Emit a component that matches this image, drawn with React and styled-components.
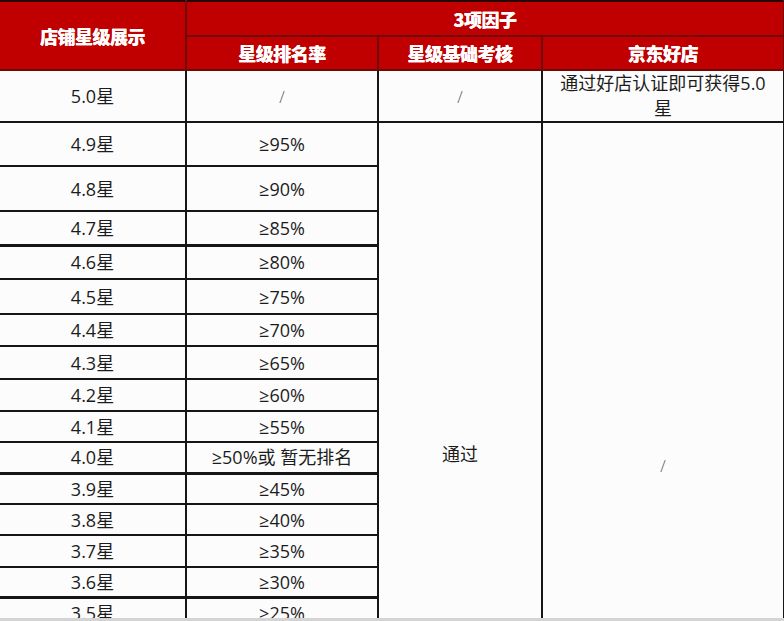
import React from 'react';
import styled, {createGlobalStyle} from "styled-components";

const GlobalStyle = createGlobalStyle`
  html, body {
    margin: 0;
    padding: 0;
    background: #fcfcfd;
    overflow: hidden;
  }
`;

const Page = styled.div`
  width: 784px;
  height: 621px;
  overflow: hidden;
  background-color: #fcfcfd;
  border-bottom: 3px solid #d4d4d4;
  box-sizing: border-box;
`;

const Table = styled.table`
  width: 784px;
  table-layout: fixed;
  border-collapse: collapse;
  font-family: "Open Sans", "Noto Sans CJK SC", sans-serif;
  color: #1c1c1c;
`;

const HeadCell = styled.th`
  background-color: #c00000;
  color: #ffffff;
  font-family: "Noto Sans CJK SC", sans-serif;
  font-size: 18px;
  font-weight: 900;
  text-align: center;
  vertical-align: middle;
  padding: 0;
  border: 2px solid #6e0a0a;
  border-top-color: #2a0505;
  border-left: none;
  letter-spacing: -0.5px;
  text-shadow: 0 0 0.6px #fff;
`;

const Cell = styled.td`
  font-size: 18px;
  text-align: center;
  vertical-align: ${p => (p.$top ? "top" : "middle")};
  padding: ${p => (p.$top ? `${p.$top}px 0 0` : "0")};
  border-bottom: ${p => (p.$thick ? 3 : 2)}px solid #161616;
  border-right: 2px solid #161616;
  line-height: 22px;
  white-space: nowrap;
`;

const WrapCell = styled(Cell)`
  white-space: normal;
  line-height: 25px;
  padding: 0 12px;
`;

const Slash = styled.span`
  color: #555;
  font-size: 16px;
  font-weight: 300;
`;

const rows = [
  {star: "4.9星", rate: "≥95%", h: 44},
  {star: "4.8星", rate: "≥90%", h: 45},
  {star: "4.7星", rate: "≥85%", h: 34, thick: true},
  {star: "4.6星", rate: "≥80%", h: 34},
  {star: "4.5星", rate: "≥75%", h: 35},
  {star: "4.4星", rate: "≥70%", h: 32},
  {star: "4.3星", rate: "≥65%", h: 33},
  {star: "4.2星", rate: "≥60%", h: 32},
  {star: "4.1星", rate: "≥55%", h: 31},
  {star: "4.0星", rate: "≥50%或 暂无排名", h: 31, thick: true},
  {star: "3.9星", rate: "≥45%", h: 31},
  {star: "3.8星", rate: "≥40%", h: 31},
  {star: "3.7星", rate: "≥35%", h: 32},
  {star: "3.6星", rate: "≥30%", h: 30, thick: true},
  {star: "3.5星", rate: "≥25%", h: 32},
];

const App = () => {
  return (
    <Page>
      <GlobalStyle/>
      <Table>
        <colgroup>
          <col style={{width: 186}}/>
          <col style={{width: 192}}/>
          <col style={{width: 164}}/>
          <col style={{width: 242}}/>
        </colgroup>
        <thead>
          <tr style={{height: 35}}>
            <HeadCell rowSpan={2}>店铺星级展示</HeadCell>
            <HeadCell colSpan={3}>3项因子</HeadCell>
          </tr>
          <tr style={{height: 34}}>
            <HeadCell>星级排名率</HeadCell>
            <HeadCell>星级基础考核</HeadCell>
            <HeadCell>京东好店</HeadCell>
          </tr>
        </thead>
        <tbody>
          <tr style={{height: 48}}>
            <Cell>5.0星</Cell>
            <Cell><Slash>/</Slash></Cell>
            <Cell><Slash>/</Slash></Cell>
            <WrapCell>通过好店认证即可获得5.0星</WrapCell>
          </tr>
          {rows.map((r, i) => (
            <tr key={r.star} style={{height: r.h}}>
              <Cell $thick={r.thick}>{r.star}</Cell>
              <Cell $thick={r.thick}>{r.rate}</Cell>
              {i === 0 && (
                <>
                  <Cell rowSpan={rows.length} $top={320}>通过</Cell>
                  <Cell rowSpan={rows.length} $top={331}><Slash>/</Slash></Cell>
                </>
              )}
            </tr>
          ))}
        </tbody>
      </Table>
    </Page>
  );
};

export default App;
